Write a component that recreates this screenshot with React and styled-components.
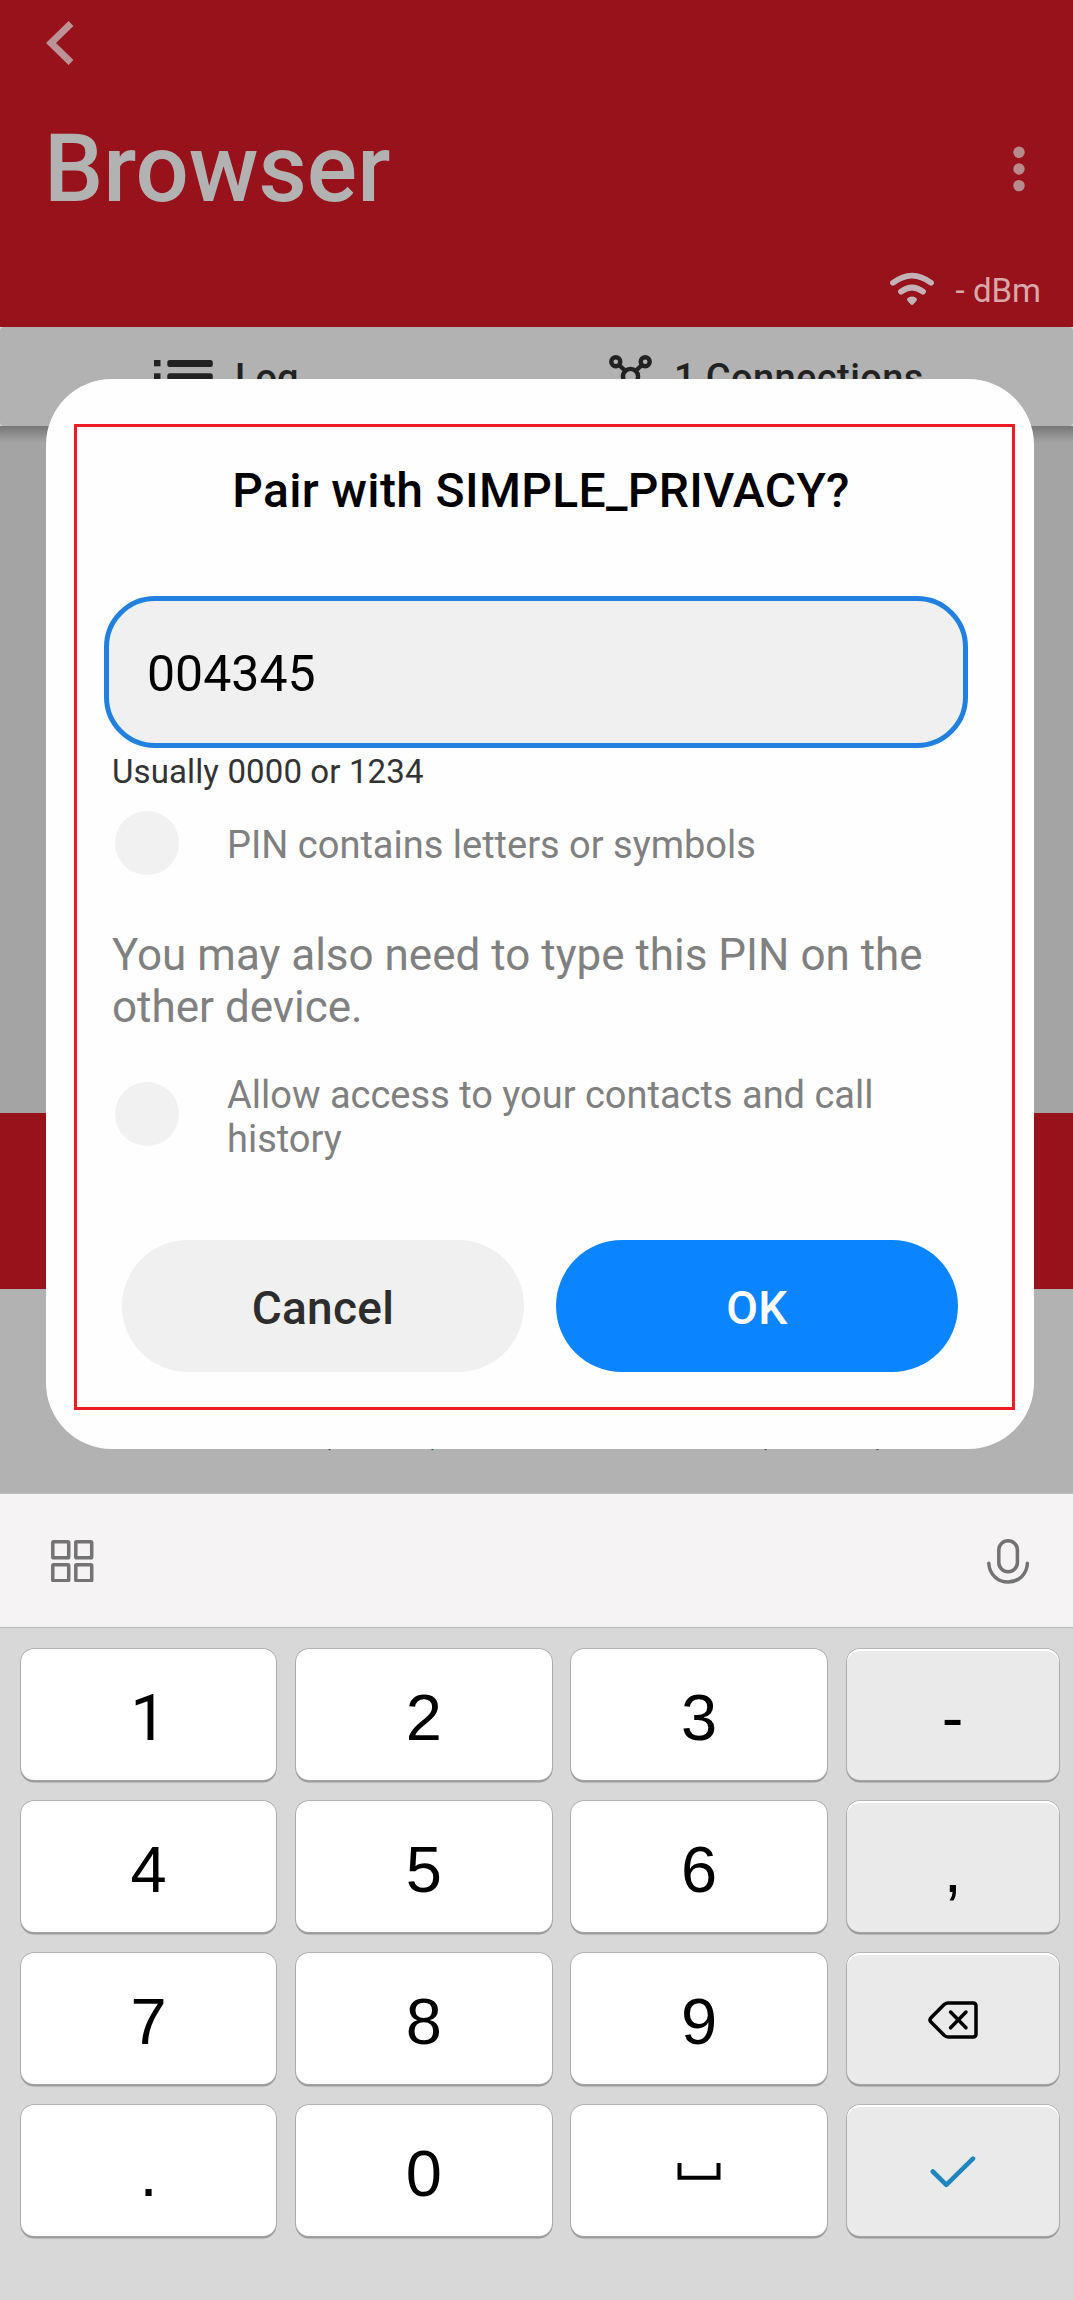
import React from "react";
import styled, { createGlobalStyle } from "styled-components";

const Global = createGlobalStyle`
  * { box-sizing: border-box; }
  body { margin: 0; background: #d8d8d8; font-family: Roboto, "Liberation Sans", sans-serif; }
  svg { display: block; flex: none; }
`;

const Screen = styled.div`
  position: relative;
  width: 1073px;
  height: 2300px;
  overflow: hidden;
  display: flex;
  flex-direction: column;
`;

const Header = styled.header`
  height: 327px;
  flex: none;
  background: #97121b;
  padding: 21px 33px 0 46px;
`;

const TitleRow = styled.div`
  display: flex;
  align-items: center;
  justify-content: space-between;
  margin-top: 49px;
  padding-right: 15px;
`;

const PageTitle = styled.h1`
  margin: 0 0 0 -2px;
  font-size: 94px;
  line-height: 110px;
  font-weight: 500;
  color: #b2b2b2;
`;

const SignalRow = styled.div`
  display: flex;
  justify-content: flex-end;
  margin-top: 48px;
  margin-right: -1px;
  font-size: 33px;
  line-height: 38px;
  color: #d9a9aa;
  gap: 21px;
`;

const Tabs = styled.nav`
  height: 99px;
  flex: none;
  display: flex;
  background: #b2b2b2;
  border-radius: 4px;
  padding-left: 154px;
`;

const Tab = styled.div`
  display: flex;
  align-items: flex-start;
  width: ${(p) => p.$width}px;
  padding-top: ${(p) => p.$top}px;
`;

const TabLabel = styled.span`
  font-size: 38px;
  line-height: 44px;
  font-weight: 500;
  color: #222;
  margin: ${(p) => p.$offset}px 0 0 ${(p) => p.$gap}px;
  letter-spacing: ${(p) => p.$track || 0}px;
`;

const Content = styled.div`
  height: 687px;
  flex: none;
  background: linear-gradient(#777, #a4a4a4 17px);
`;

const Banner = styled.div`
  height: 176px;
  flex: none;
  background: #97121b;
`;

const BottomNav = styled.div`
  height: 205px;
  flex: none;
  display: flex;
  background: #b2b2b2;
  border-bottom: 1px solid #bdbdbd;
  padding: 120px 0 0 319px;
  gap: 312px;
  font-size: 36px;
  line-height: 42px;
`;

const NavMarks = styled.div`
  display: flex;
  justify-content: space-between;
  width: ${(p) => p.$width}px;
  color: ${(p) => p.$color};
`;

const Dialog = styled.section`
  position: absolute;
  top: 379px;
  left: 46px;
  width: 988px;
  height: 1070px;
  padding: 45px 19px 39px 28px;
  background: #fefefe;
  border-radius: 66px;
`;

const Frame = styled.div`
  height: 986px;
  border: 3px solid #ed1c24;
  padding: 36px 44px 0 27px;
  white-space: nowrap;
`;

const DialogTitle = styled.h2`
  margin: 0;
  padding-left: 10px;
  text-align: center;
  font-size: 48px;
  line-height: 56px;
  font-weight: 500;
  color: #000;
  letter-spacing: 0.35px;
`;

const PinField = styled.div`
  display: flex;
  align-items: center;
  height: 152px;
  margin-top: 77px;
  padding: 4px 0 0 38px;
  border: 5px solid #2080e0;
  border-radius: 51px;
  background: #f0f0f0;
  font-size: 50px;
  color: #000;
`;

const Hint = styled.p`
  margin: 4px 0 0 8px;
  font-size: 33px;
  line-height: 40px;
  color: #333;
  letter-spacing: 0.12px;
`;

const Option = styled.label`
  display: flex;
  align-items: flex-start;
  margin: ${(p) => p.$top}px 0 0 11px;
  height: ${(p) => p.$height}px;
`;

const Check = styled.span`
  flex: none;
  width: 64px;
  height: 64px;
  border-radius: 50%;
  background: #f1f1f1;
  margin-top: ${(p) => p.$drop || 0}px;
`;

const OptionText = styled.span`
  margin: ${(p) => p.$drop || 0}px 0 0 48px;
  font-size: 38px;
  line-height: 44px;
  color: #808080;
`;

const Note = styled.p`
  margin: 54px 0 0 8px;
  font-size: 44px;
  line-height: 52px;
  color: #808080;
`;

const Actions = styled.div`
  display: flex;
  gap: 32px;
  margin: 79px 10px 0 18px;
`;

const Button = styled.button`
  flex: 1;
  height: 132px;
  border: 0;
  border-radius: 66px;
  padding: 4px 0 0;
  font: 500 46px Roboto, "Liberation Sans", sans-serif;
  letter-spacing: 0.3px;
  color: ${(p) => (p.$primary ? "#fff" : "#2d2d2d")};
  background: ${(p) => (p.$primary ? "#0a84ff" : "#f0f0f0")};
`;

const Toolbar = styled.div`
  height: 134px;
  flex: none;
  display: flex;
  justify-content: space-between;
  background: #f5f3f4;
  border-bottom: 1px solid #bababa;
  padding: 45px 43px 0 51px;
`;

const Keypad = styled.div`
  display: grid;
  grid-template-columns: 255.5px 255.5px 255.5px 212px;
  grid-auto-rows: 131.5px;
  gap: 20.5px 19.8px;
  padding: 20.7px 0 0 20.8px;
`;

const Key = styled.div`
  display: flex;
  align-items: center;
  justify-content: center;
  border-radius: 13px;
  background: ${(p) => (p.$side ? "#eaeaea" : "#fff")};
  box-shadow: ${(p) => (p.$side ? "inset 0 2px 0 #fff, " : "")}0 0 0 0.8px #a8a8a8, 0 2px 0 0.5px #9a9a9a;
  font-family: ${(p) => (p.$plain ? "Roboto" : '"Liberation Sans"')}, Arial, sans-serif;
  font-size: 65px;
  line-height: 74px;
  padding-top: ${(p) => (p.$glyph ? 3 : 7)}px;
  color: #000;
`;

const BackIcon = () => (
  <svg width="28" height="44" viewBox="0 0 28 44">
    <path d="M25 2.5 L5 22 L25 41.5" fill="none" stroke="#bd9296" strokeWidth="7" />
  </svg>
);

const MoreIcon = () => (
  <svg width="12" height="46" viewBox="0 0 12 46" fill="#b98a8d">
    <circle cx="6" cy="6.3" r="5.7" />
    <circle cx="6" cy="23" r="5.7" />
    <circle cx="6" cy="39.6" r="5.7" />
  </svg>
);

const WifiIcon = () => (
  <svg width="46" height="34" viewBox="0 0 46 34" fill="none" stroke="#c3b3b6" strokeWidth="5.8" strokeLinecap="round">
    <path d="M4 10.8 Q23 -3.6 42 10.8" />
    <path d="M12 19.6 Q23 11.2 34 19.6" />
    <path d="M20.3 27.5 Q23 25.8 25.7 27.5 L23 30.6 Z" fill="#c3b3b6" strokeWidth="4.4" strokeLinejoin="round" />
  </svg>
);

const ListIcon = () => (
  <svg width="59" height="34" viewBox="0 0 59 34" fill="#222">
    {[0, 13.3, 26.6].map((y) => (
      <g key={y}>
        <rect x="0" y={y} width="6.5" height="6.3" />
        <rect x="13.3" y={y} width="45.5" height="7" rx="2.5" />
      </g>
    ))}
  </svg>
);

const GraphIcon = () => (
  <svg width="43" height="44" viewBox="0 0 43 44" fill="none" stroke="#222" strokeWidth="4.4">
    <circle cx="6.8" cy="6.7" r="4.5" />
    <circle cx="36.2" cy="6.7" r="4.5" />
    <circle cx="21.5" cy="21.5" r="7.6" />
    <circle cx="21.5" cy="38" r="4" />
    <path d="M10 10 L16.5 16 M33 10 L26.5 16 M21.5 29 V34" />
  </svg>
);

const AppsIcon = () => (
  <svg width="43" height="43" viewBox="0 0 43 43" fill="none" stroke="#737373" strokeWidth="3.5">
    {[[1.8, 2.8], [24.8, 2.8], [1.8, 25.8], [24.8, 25.8]].map(([x, y]) => (
      <rect key={`${x}-${y}`} x={x} y={y} width="15.9" height="15.9" rx="0.8" />
    ))}
  </svg>
);

const MicIcon = () => (
  <svg width="43" height="45" viewBox="0 0 43 45" fill="none" stroke="#737373" strokeWidth="3.5" strokeLinecap="round">
    <rect x="11.8" y="1.8" width="18.6" height="31" rx="9.3" />
    <path d="M1.8 24.3 C2.2 35 10.5 43 21.1 43 S40 35 40.4 24.3" />
  </svg>
);

const BackspaceIcon = () => (
  <svg width="50" height="38" viewBox="0 0 50 38" fill="none" stroke="#000" strokeWidth="3.5" strokeLinecap="round" strokeLinejoin="round">
    <path d="M20 1.9 H45 Q48 1.9 48 4.9 V32.9 Q48 35.9 45 35.9 H20 Q18 35.9 16.4 34.5 L3 21 Q1 18.9 3 16.8 L16.4 3.3 Q18 1.9 20 1.9 Z" />
    <path d="M22.6 11 L38 26.8 M38 11 L22.6 26.8" />
  </svg>
);

const SpaceIcon = () => (
  <svg width="44" height="17" viewBox="0 0 44 17" fill="none" stroke="#000" strokeWidth="4">
    <path d="M2.5 0 V14.7 H41.5 V0" />
  </svg>
);

const CheckIcon = () => (
  <svg width="46" height="32" viewBox="0 0 46 32" fill="none" stroke="#1f86bd" strokeWidth="4.6" strokeLinecap="round" strokeLinejoin="round">
    <path d="M2.8 15.5 L16.3 28.8 L43 2.6" />
  </svg>
);

const KEYS = [
  "1", "2", "3", "-",
  "4", "5", "6", ",",
  "7", "8", "9", <BackspaceIcon />,
  ".", "0", <SpaceIcon />, <CheckIcon />,
];

export default function App() {
  return (
    <Screen>
      <Global />
      <Header>
        <BackIcon />
        <TitleRow>
          <PageTitle>Browser</PageTitle>
          <MoreIcon />
        </TitleRow>
        <SignalRow>
          <WifiIcon />
          <span>- dBm</span>
        </SignalRow>
      </Header>
      <Tabs>
        <Tab $width={455} $top={33}>
          <ListIcon />
          <TabLabel $gap={22} $offset={-4}>Log</TabLabel>
        </Tab>
        <Tab $width={400} $top={28}>
          <GraphIcon />
          <TabLabel $gap={22} $offset={1} $track={0.4}>1 Connections</TabLabel>
        </Tab>
      </Tabs>
      <Content />
      <Banner />
      <BottomNav>
        <NavMarks $width={124} $color="#1d4558"><span>(</span><span>)</span></NavMarks>
        <NavMarks $width={133} $color="#333"><span>(</span><span>)</span></NavMarks>
      </BottomNav>
      <Toolbar>
        <AppsIcon />
        <MicIcon />
      </Toolbar>
      <Keypad>
        {KEYS.map((key, i) => (
          <Key key={i} $side={i % 4 === 3} $plain={key === "1"} $glyph={typeof key !== "string"}>{key}</Key>
        ))}
      </Keypad>
      <Dialog>
        <Frame>
          <DialogTitle>Pair with SIMPLE_PRIVACY?</DialogTitle>
          <PinField>004345</PinField>
          <Hint>Usually 0000 or 1234</Hint>
          <Option $top={19} $height={64}>
            <Check />
            <OptionText $drop={12}>PIN contains letters or symbols</OptionText>
          </Option>
          <Note>You may also need to type this PIN on the<br />other device.</Note>
          <Option $top={40} $height={88}>
            <Check $drop={9} />
            <OptionText>Allow access to your contacts and call<br />history</OptionText>
          </Option>
          <Actions>
            <Button>Cancel</Button>
            <Button $primary>OK</Button>
          </Actions>
        </Frame>
      </Dialog>
    </Screen>
  );
}
